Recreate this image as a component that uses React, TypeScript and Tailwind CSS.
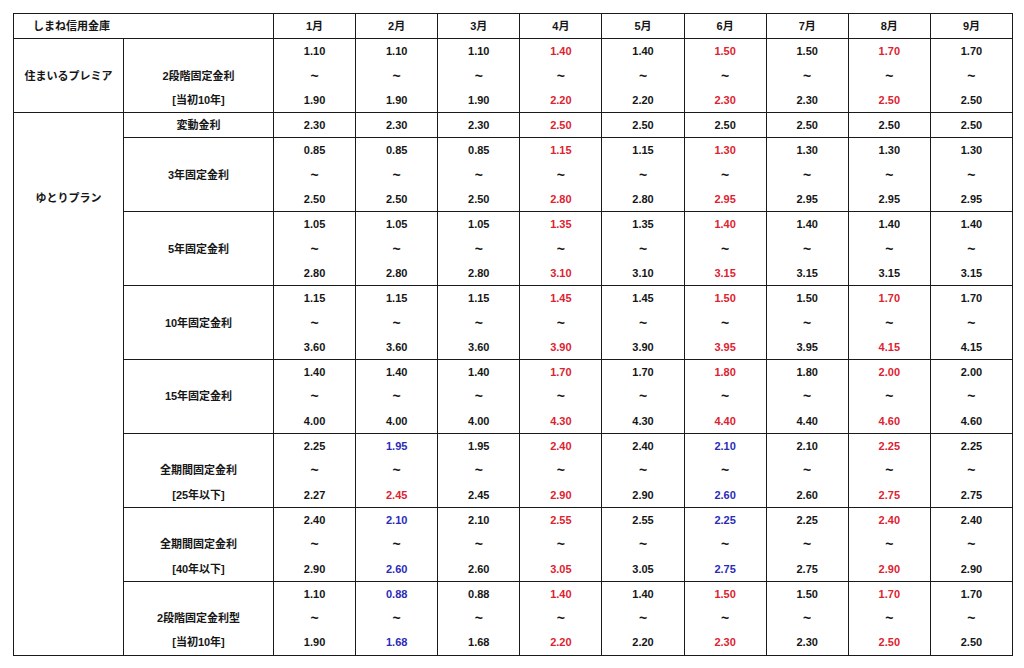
import React from "react";

type Tone = "k" | "r" | "b";
type Cell = { lo: string; hi?: string; lt?: Tone; ht?: Tone };

interface RateRow {
  plan?: { name: string; span: number; top?: boolean };
  label: string;
  sub?: string;
  cells: Cell[];
}

const months = ["1月", "2月", "3月", "4月", "5月", "6月", "7月", "8月", "9月"];

// compact builder: "1.10-1.90" black, "r:1.40-2.20" red both, "b:..." blue both
const c = (s: string): Cell => {
  let tone: Tone = "k";
  if (s.startsWith("r:")) tone = "r";
  if (s.startsWith("b:")) tone = "b";
  const v = s.replace(/^[rb]:/, "");
  const [lo, hi] = v.split("-");
  return { lo, hi, lt: tone, ht: tone };
};

const rows: RateRow[] = [
  {
    plan: { name: "住まいるプレミア", span: 1 },
    label: "2段階固定金利",
    sub: "[当初10年]",
    cells: ["1.10-1.90", "1.10-1.90", "1.10-1.90", "r:1.40-2.20", "1.40-2.20", "r:1.50-2.30", "1.50-2.30", "r:1.70-2.50", "1.70-2.50"].map(c),
  },
  {
    plan: { name: "ゆとりプラン", span: 8, top: true },
    label: "変動金利",
    cells: ["2.30", "2.30", "2.30", "r:2.50", "2.50", "2.50", "2.50", "2.50", "2.50"].map(c),
  },
  {
    label: "3年固定金利",
    cells: ["0.85-2.50", "0.85-2.50", "0.85-2.50", "r:1.15-2.80", "1.15-2.80", "r:1.30-2.95", "1.30-2.95", "1.30-2.95", "1.30-2.95"].map(c),
  },
  {
    label: "5年固定金利",
    cells: ["1.05-2.80", "1.05-2.80", "1.05-2.80", "r:1.35-3.10", "1.35-3.10", "r:1.40-3.15", "1.40-3.15", "1.40-3.15", "1.40-3.15"].map(c),
  },
  {
    label: "10年固定金利",
    cells: ["1.15-3.60", "1.15-3.60", "1.15-3.60", "r:1.45-3.90", "1.45-3.90", "r:1.50-3.95", "1.50-3.95", "r:1.70-4.15", "1.70-4.15"].map(c),
  },
  {
    label: "15年固定金利",
    cells: ["1.40-4.00", "1.40-4.00", "1.40-4.00", "r:1.70-4.30", "1.70-4.30", "r:1.80-4.40", "1.80-4.40", "r:2.00-4.60", "2.00-4.60"].map(c),
  },
  {
    label: "全期間固定金利",
    sub: "[25年以下]",
    cells: [
      c("2.25-2.27"),
      { lo: "1.95", hi: "2.45", lt: "b", ht: "r" },
      ...["1.95-2.45", "r:2.40-2.90", "2.40-2.90", "b:2.10-2.60", "2.10-2.60", "r:2.25-2.75", "2.25-2.75"].map(c),
    ],
  },
  {
    label: "全期間固定金利",
    sub: "[40年以下]",
    cells: ["2.40-2.90", "b:2.10-2.60", "2.10-2.60", "r:2.55-3.05", "2.55-3.05", "b:2.25-2.75", "2.25-2.75", "r:2.40-2.90", "2.40-2.90"].map(c),
  },
  {
    label: "2段階固定金利型",
    sub: "[当初10年]",
    cells: ["1.10-1.90", "b:0.88-1.68", "0.88-1.68", "r:1.40-2.20", "1.40-2.20", "r:1.50-2.30", "1.50-2.30", "r:1.70-2.50", "1.70-2.50"].map(c),
  },
];

const toneClass: Record<Tone, string> = {
  k: "text-[#161616]",
  r: "text-[#dc2330]",
  b: "text-[#2b2bb8]",
};

const td = "border border-[#1a1a1a] text-center align-middle p-0";

const RateCell = ({ cell }: { cell: Cell }) => {
  if (!cell.hi) {
    return <td className={`${td} ${toneClass[cell.lt ?? "k"]}`}>{cell.lo}</td>;
  }
  return (
    <td className={td}>
      <div className={`h-[24.3px] ${toneClass[cell.lt ?? "k"]}`}>{cell.lo}</div>
      <div className="h-[24.3px] text-[14px] text-[#161616]">~</div>
      <div className={`h-[24.3px] ${toneClass[cell.ht ?? "k"]}`}>{cell.hi}</div>
    </td>
  );
};

export default function App() {
  return (
    <div className="min-h-[668px] w-[1024px] bg-white pl-[13px] pt-[13px] font-['Liberation_Sans','Noto_Sans_CJK_JP',sans-serif] text-[11px] font-bold leading-[24.3px] text-[#161616]">
      <table className="w-[1000px] table-fixed border-collapse border border-[#1a1a1a]">
        <colgroup>
          <col className="w-[110px]" />
          <col className="w-[150px]" />
          {months.map((m) => (
            <col key={m} />
          ))}
        </colgroup>
        <thead>
          <tr className="h-[23px]">
            <th colSpan={2} className="border border-[#1a1a1a] p-0 pl-[19px] text-left font-bold">
              しまね信用金庫
            </th>
            {months.map((m) => (
              <th key={m} className="border border-[#1a1a1a] p-0 text-center font-bold">
                {m}
              </th>
            ))}
          </tr>
        </thead>
        <tbody>
          {rows.map((row, i) => {
            const tall = row.cells.some((x) => x.hi);
            return (
              <tr key={i} className={tall ? "h-[73px]" : "h-[23px]"}>
                {row.plan && (
                  <td
                    rowSpan={row.plan.span}
                    className={`border border-[#1a1a1a] p-0 text-center ${
                      row.plan.top ? "align-top pt-[73px]" : "align-middle"
                    }`}
                  >
                    {row.plan.name}
                  </td>
                )}
                <td className={td}>
                  {row.sub ? (
                    <>
                      <div className="h-[24.3px]" />
                      <div className="h-[24.3px]">{row.label}</div>
                      <div className="h-[24.3px]">{row.sub}</div>
                    </>
                  ) : (
                    row.label
                  )}
                </td>
                {row.cells.map((cell, j) => (
                  <RateCell key={j} cell={cell} />
                ))}
              </tr>
            );
          })}
        </tbody>
      </table>
    </div>
  );
}
